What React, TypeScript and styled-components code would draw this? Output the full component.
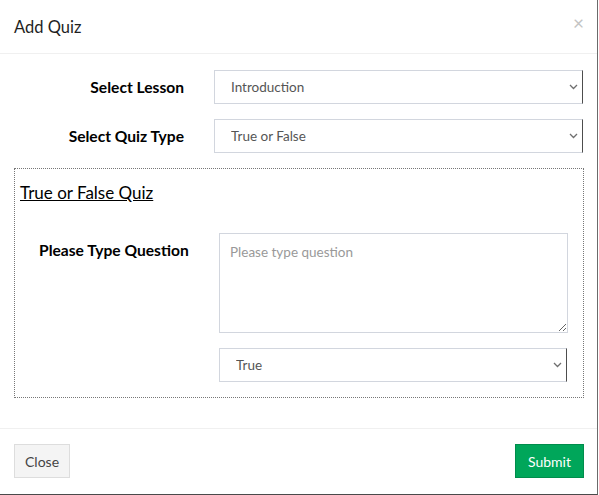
import React from 'react';
import styled, { createGlobalStyle } from 'styled-components';

const GlobalStyle = createGlobalStyle`
	html, body {
		margin: 0;
		background: #fff;
	}
	body {
		font-family: Lato, "Liberation Sans", sans-serif;
		color: #333;
	}
	* {
		box-sizing: border-box;
	}
`;

function Chevron() {
	return (
		<Arrow width="9" height="6" viewBox="0 0 9 6">
			<path d="M1 1l3.5 3.5L8 1" fill="none" stroke="#6f6f6f" strokeWidth="1.3" />
		</Arrow>
	);
}

export default function App() {
	return (
		<>
			<GlobalStyle />
			<Modal>
				<Header>
					<Title>Add Quiz</Title>
					<CloseX aria-label="close">×</CloseX>
				</Header>
				<Body>
					<FormRow>
						<Label>Select Lesson</Label>
						<SelectWrap $width={369}>
							<Select defaultValue="intro">
								<option value="intro">Introduction</option>
							</Select>
							<Chevron />
						</SelectWrap>
					</FormRow>
					<FormRow>
						<Label>Select Quiz Type</Label>
						<SelectWrap $width={369}>
							<Select defaultValue="tf">
								<option value="tf">True or False</option>
							</Select>
							<Chevron />
						</SelectWrap>
					</FormRow>
					<QuizBox>
						<QuizTitle>True or False Quiz</QuizTitle>
						<QuestionRow>
							<QuestionLabel>Please Type Question</QuestionLabel>
							<QuestionFields>
								<Question placeholder="Please type question" />
								<SelectWrap $width={348}>
									<Select $pad={16} defaultValue="true">
										<option value="true">True</option>
										<option value="false">False</option>
									</Select>
									<Chevron />
								</SelectWrap>
							</QuestionFields>
						</QuestionRow>
					</QuizBox>
				</Body>
				<Footer>
					<Button>Close</Button>
					<Button $primary>Submit</Button>
				</Footer>
			</Modal>
		</>
	);
}

const Modal = styled.div`
	display: flex;
	flex-direction: column;
	width: 598px;
	height: 495px;
	background: #fff;
	border-right: 1px solid #6b6b6b;
	border-bottom: 1px solid #4a4a4a;
`;

const Header = styled.div`
	display: flex;
	align-items: center;
	justify-content: space-between;
	height: 54px;
	padding: 1px 14px 0 14px;
	border-bottom: 1px solid #f0f0f0;
`;

const Title = styled.h4`
	margin: 0;
	font-size: 16.5px;
	font-weight: 400;
	color: #1f1f1f;
`;

const CloseX = styled.span`
	font-size: 19px;
	line-height: 1;
	color: #c4c4c4;
	margin-right: -1px;
	margin-top: -10px;
`;

const Body = styled.div`
	flex: 1;
	display: flex;
	flex-direction: column;
	gap: 15px;
	padding: 16px 0 0 14px;
`;

const FormRow = styled.div`
	display: grid;
	grid-template-columns: 170px 369px;
	column-gap: 30px;
	align-items: center;
`;

const Label = styled.label`
	text-align: right;
	font-size: 15.6px;
	font-weight: 700;
	color: #000;
`;

const SelectWrap = styled.div<{ $width: number }>`
	position: relative;
	width: ${(p) => p.$width}px;
	height: 34px;
`;

const Select = styled.select<{ $pad?: number }>`
	appearance: none;
	width: 100%;
	height: 100%;
	padding: 0 24px 0 ${(p) => p.$pad ?? 16}px;
	font-family: Lato, "Liberation Sans", sans-serif;
	font-size: 13.5px;
	color: #555;
	background: #fff;
	border: 1px solid #d2d6de;
	border-right: 1px solid #4d4d4d;
	border-radius: 0;
	outline: none;
`;

const Arrow = styled.svg`
	position: absolute;
	right: 5px;
	top: 14px;
	pointer-events: none;
`;

const QuizBox = styled.div`
	width: 570px;
	height: 230px;
	border: 1px dotted #777;
	padding: 12px 5px 0;
`;

const QuizTitle = styled.div`
	font-size: 17px;
	line-height: 24px;
	color: #000;
	text-decoration: underline;
`;

const QuestionRow = styled.div`
	display: grid;
	grid-template-columns: 150px 349px;
	column-gap: 30px;
	margin-top: 28px;
	padding-left: 19px;
`;

const QuestionLabel = styled.label`
	padding-top: 8px;
	font-size: 15.6px;
	font-weight: 700;
	color: #000;
	white-space: nowrap;
`;

const QuestionFields = styled.div`
	display: flex;
	flex-direction: column;
	gap: 15px;
`;

const Question = styled.textarea`
	width: 349px;
	height: 100px;
	padding: 10px 10px;
	font-family: Lato, "Liberation Sans", sans-serif;
	font-size: 13.5px;
	color: #555;
	border: 1px solid #d2d6de;
	border-radius: 0;
	outline: none;

	&::placeholder {
		color: #999;
	}
`;

const Footer = styled.div`
	display: flex;
	justify-content: space-between;
	align-items: flex-start;
	height: 66px;
	padding: 15px 13px 0 14px;
	border-top: 1px solid #f0f0f0;
`;

const Button = styled.button<{ $primary?: boolean }>`
	height: 34px;
	padding: 0 ${(p) => (p.$primary ? 12 : 10)}px;
	font-family: Lato, "Liberation Sans", sans-serif;
	font-size: 14px;
	color: ${(p) => (p.$primary ? '#fff' : '#444')};
	background: ${(p) => (p.$primary ? '#00a65a' : '#f4f4f4')};
	border: 1px solid ${(p) => (p.$primary ? '#008d4c' : '#ddd')};
	border-radius: 0;
`;
